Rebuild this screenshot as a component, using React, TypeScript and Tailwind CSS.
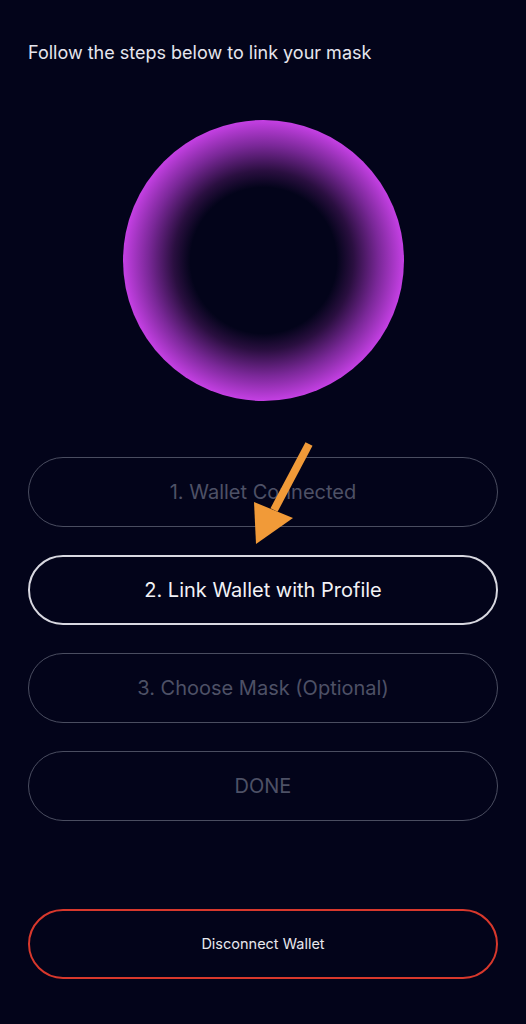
import React from "react";

type Step = {
  label: string;
  active?: boolean;
};

const steps: Step[] = [
  { label: "1. Wallet Connected" },
  { label: "2. Link Wallet with Profile", active: true },
  { label: "3. Choose Mask (Optional)" },
  { label: "DONE" },
];

const Arrow = () => (
  <svg
    className="absolute left-[240px] top-[436px] pointer-events-none"
    width="80"
    height="115"
    viewBox="240 436 80 115"
  >
    <line x1="309" y1="444" x2="274" y2="510" stroke="#f19a38" strokeWidth="8" strokeLinecap="butt" />
    <polygon points="254,502 293,518 256,544" fill="#f19a38" />
  </svg>
);

export default function App() {
  return (
    <div
      className="relative min-h-[1024px] w-full bg-[#03041a] px-7 pt-[41px] text-white"
      style={{ fontFamily: "Inter, 'Open Sans', sans-serif" }}
    >
      <p className="text-[18px] leading-6 text-[#e6e6ee]">
        Follow the steps below to link your mask
      </p>

      <div className="mt-[55px] flex justify-center">
        <div className="h-[281px] w-[281px] rounded-full bg-[radial-gradient(circle_closest-side,#03041a_0%,#03041a_52%,#2a0f40_64%,#7a2898_82%,#c540e4_100%)]" />
      </div>

      <div className="mt-[56px] flex flex-col gap-7">
        {steps.map((step) => (
          <div
            key={step.label}
            className={
              step.active
                ? "flex h-[70px] items-center justify-center rounded-full border-2 border-[#d8d8e0] text-[20px] text-[#f2f2f6]"
                : "flex h-[70px] items-center justify-center rounded-full border border-[#4a4d60] text-[20px] text-[#4e5166]"
            }
          >
            {step.label}
          </div>
        ))}
      </div>

      <div className="mt-[88px] flex h-[70px] items-center justify-center rounded-full border-2 border-[#d8382c] text-[14.5px] text-[#e8e8ee]">
        Disconnect Wallet
      </div>

      <Arrow />
    </div>
  );
}
